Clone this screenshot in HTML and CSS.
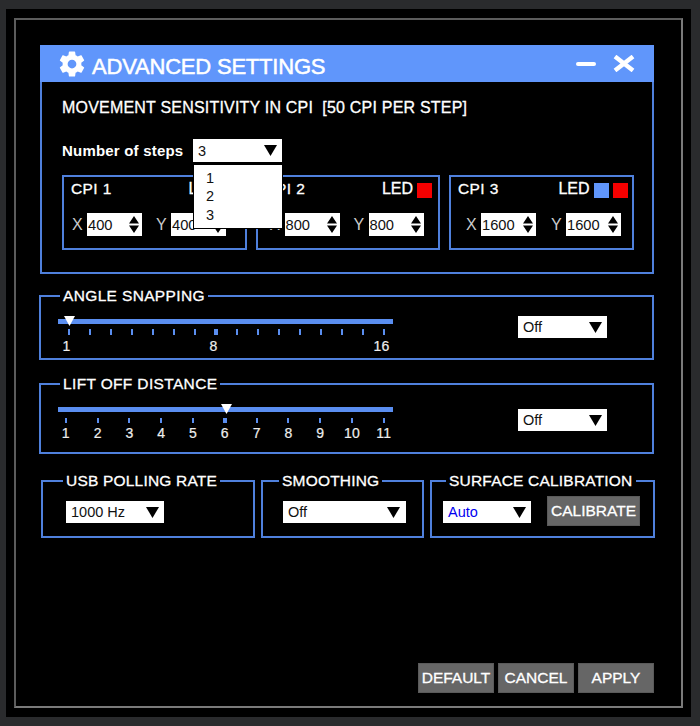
FILE: index.html
```html
<!DOCTYPE html>
<html lang="en">
<head>
<meta charset="utf-8">
<title>Advanced Settings</title>
<link rel="stylesheet" href="styles.css">
</head>
<body>
<div class="shell">
  <div class="frame">
    <section class="panel">
      <header class="titlebar">
        <svg class="gear" viewBox="0 0 24 24"><path fill="#fff" d="M12 15.5A3.5 3.5 0 0 1 8.5 12 3.5 3.5 0 0 1 12 8.5a3.5 3.5 0 0 1 3.5 3.5 3.5 3.5 0 0 1-3.5 3.5m7.43-2.53c.04-.32.07-.64.07-.97s-.03-.66-.07-1l2.11-1.63c.19-.15.24-.42.12-.64l-2-3.46c-.12-.22-.39-.31-.61-.22l-2.49 1c-.52-.39-1.06-.73-1.69-.98l-.37-2.65A.506.506 0 0 0 14 2h-4c-.25 0-.46.18-.5.42l-.37 2.65c-.63.25-1.17.59-1.69.98l-2.49-1c-.22-.09-.49 0-.61.22l-2 3.46c-.13.22-.07.49.12.64L4.57 11c-.04.34-.07.67-.07 1s.03.65.07.97l-2.11 1.66c-.19.15-.25.42-.12.64l2 3.46c.12.22.39.3.61.22l2.49-1.01c.52.4 1.06.74 1.69.99l.37 2.65c.04.24.25.42.5.42h4c.25 0 .46-.18.5-.42l.37-2.65c.63-.26 1.17-.59 1.69-.99l2.49 1.01c.22.08.49 0 .61-.22l2-3.46c.12-.22.07-.49-.12-.64z"/></svg>
        <h1 class="title">ADVANCED SETTINGS</h1>
        <svg class="win-min" viewBox="0 0 20 4"><rect width="20" height="4" rx="2" fill="#fff"/></svg>
        <svg class="win-close" viewBox="0 0 24 17"><path d="M3 1.5 21 15.5M21 1.5 3 15.5" stroke="#fff" stroke-width="4.4" fill="none"/></svg>
      </header>
      <div class="panel-body">
        <h2 class="heading">MOVEMENT SENSITIVITY IN CPI&nbsp; [50 CPI PER STEP]</h2>
        <div class="steps">
          <span class="steps-label">Number of steps</span>
          <div class="select select-steps">
            <span>3</span>
            <svg class="caret" viewBox="0 0 13 11"><path d="M0 0H13L6.5 11Z"/></svg>
            <ul class="dropdown">
              <li>1</li>
              <li>2</li>
              <li>3</li>
            </ul>
          </div>
        </div>
        <div class="cpi-row">
          <div class="cpi cpi-1">
            <div class="cpi-head">
              <span class="cpi-name">CPI 1</span>
              <span class="led">LED</span>
              <i class="swatch swatch-red"></i>
            </div>
            <div class="cpi-fields">
              <span class="axis">X</span>
              <div class="spin"><span>400</span><svg class="spin-arrows" viewBox="0 0 10 17"><path d="M5 0 10 7.5H0ZM5 17 0 9.5H10Z"/></svg></div>
              <span class="axis axis-y">Y</span>
              <div class="spin"><span>400</span><svg class="spin-arrows" viewBox="0 0 10 17"><path d="M5 0 10 7.5H0ZM5 17 0 9.5H10Z"/></svg></div>
            </div>
          </div>
          <div class="cpi cpi-2">
            <div class="cpi-head">
              <span class="cpi-name">CPI 2</span>
              <span class="led">LED</span>
              <i class="swatch swatch-red"></i>
            </div>
            <div class="cpi-fields">
              <span class="axis">X</span>
              <div class="spin"><span>800</span><svg class="spin-arrows" viewBox="0 0 10 17"><path d="M5 0 10 7.5H0ZM5 17 0 9.5H10Z"/></svg></div>
              <span class="axis axis-y">Y</span>
              <div class="spin"><span>800</span><svg class="spin-arrows" viewBox="0 0 10 17"><path d="M5 0 10 7.5H0ZM5 17 0 9.5H10Z"/></svg></div>
            </div>
          </div>
          <div class="cpi cpi-3">
            <div class="cpi-head">
              <span class="cpi-name">CPI 3</span>
              <span class="led">LED</span>
              <i class="swatch swatch-blue"></i>
              <i class="swatch swatch-red"></i>
            </div>
            <div class="cpi-fields">
              <span class="axis">X</span>
              <div class="spin"><span>1600</span><svg class="spin-arrows" viewBox="0 0 10 17"><path d="M5 0 10 7.5H0ZM5 17 0 9.5H10Z"/></svg></div>
              <span class="axis axis-y">Y</span>
              <div class="spin"><span>1600</span><svg class="spin-arrows" viewBox="0 0 10 17"><path d="M5 0 10 7.5H0ZM5 17 0 9.5H10Z"/></svg></div>
            </div>
          </div>
        </div>
      </div>
    </section>

    <section class="group group-angle">
      <h3 class="legend">ANGLE SNAPPING</h3>
      <div class="group-row">
        <div class="slider">
          <div class="track"><svg class="thumb thumb-angle" viewBox="0 0 11 10"><path d="M0 0H11L5.5 10Z"/></svg></div>
          <div class="scale scale-16 ticks">
            <i class="tick"></i><i class="tick"></i><i class="tick"></i><i class="tick"></i><i class="tick"></i><i class="tick"></i><i class="tick"></i><i class="tick tick-big"></i><i class="tick"></i><i class="tick"></i><i class="tick"></i><i class="tick"></i><i class="tick"></i><i class="tick"></i><i class="tick"></i><i class="tick"></i>
          </div>
          <div class="scale scale-16 labels">
            <span class="col-1">1</span><span class="col-8">8</span><span class="col-16">16</span>
          </div>
        </div>
        <div class="select select-side"><span>Off</span><svg class="caret" viewBox="0 0 13 11"><path d="M0 0H13L6.5 11Z"/></svg></div>
      </div>
    </section>

    <section class="group group-lift">
      <h3 class="legend">LIFT OFF DISTANCE</h3>
      <div class="group-row">
        <div class="slider">
          <div class="track"><svg class="thumb thumb-lift" viewBox="0 0 11 10"><path d="M0 0H11L5.5 10Z"/></svg></div>
          <div class="scale scale-11 ticks">
            <i class="tick"></i><i class="tick"></i><i class="tick"></i><i class="tick"></i><i class="tick"></i><i class="tick tick-big"></i><i class="tick"></i><i class="tick"></i><i class="tick"></i><i class="tick"></i><i class="tick"></i>
          </div>
          <div class="scale scale-11 labels">
            <span>1</span><span>2</span><span>3</span><span>4</span><span>5</span><span>6</span><span>7</span><span>8</span><span>9</span><span>10</span><span>11</span>
          </div>
        </div>
        <div class="select select-side"><span>Off</span><svg class="caret" viewBox="0 0 13 11"><path d="M0 0H13L6.5 11Z"/></svg></div>
      </div>
    </section>

    <div class="triple">
      <section class="group group-usb">
        <h3 class="legend">USB POLLING RATE</h3>
        <div class="select select-usb"><span>1000 Hz</span><svg class="caret" viewBox="0 0 13 11"><path d="M0 0H13L6.5 11Z"/></svg></div>
      </section>
      <section class="group group-smooth">
        <h3 class="legend">SMOOTHING</h3>
        <div class="select select-smooth"><span>Off</span><svg class="caret" viewBox="0 0 13 11"><path d="M0 0H13L6.5 11Z"/></svg></div>
      </section>
      <section class="group group-surface">
        <h3 class="legend">SURFACE CALIBRATION</h3>
        <div class="surface-row">
          <div class="select select-auto"><span class="auto-value">Auto</span><svg class="caret" viewBox="0 0 13 11"><path d="M0 0H13L6.5 11Z"/></svg></div>
          <button class="btn btn-calibrate" type="button">CALIBRATE</button>
        </div>
      </section>
    </div>

    <footer class="actions">
      <button class="btn btn-action" type="button">DEFAULT</button>
      <button class="btn btn-action" type="button">CANCEL</button>
      <button class="btn btn-action" type="button">APPLY</button>
    </footer>
  </div>
</div>
</body>
</html>
```

FILE: styles.css
```css
* { box-sizing: border-box; }
html, body { margin: 0; height: 100%; }
body {
  background: #2a2b2d;
  font-family: "Liberation Sans", Arial, sans-serif;
  color: #fff;
  overflow: hidden;
}
.shell {
  width: 685px;
  height: 708px;
  margin: 9px 0 0 6px;
  padding: 9px 8px 9px 8px;
  background: #000;
}
.frame {
  width: 669px;
  height: 690px;
  border: 2px solid #5c5c5c;
  border-right-color: #7a7a7a;
  border-bottom-color: #7a7a7a;
  padding: 25px 0 0 24px;
}

/* main panel */
.panel {
  width: 614px;
  height: 229px;
  border: 2px solid #4f80dc;
  border-top: 0;
}
.titlebar {
  display: flex;
  align-items: center;
  height: 37px;
  margin: 0 -2px;
  padding: 0 18px 0 17px;
  background: #6096fb;
}
.gear { width: 30px; height: 30px; flex: none; }
.title {
  flex: 1;
  margin: 0 0 0 5px;
  padding-top: 6px;
  font-size: 22px;
  line-height: 31px;
  font-weight: 400;
  letter-spacing: -0.2px;
  -webkit-text-stroke: 0.5px #fff;
}
.win-min { width: 20px; height: 4px; margin: 1px 16px 0 0; }
.win-close { width: 24px; height: 17px; }

.panel-body { padding: 0 0 0 20px; }
.heading {
  margin: 16px 0 0;
  font-size: 16px;
  line-height: 20px;
  font-weight: 400;
  letter-spacing: 0.2px;
  -webkit-text-stroke: 0.3px #fff;
}
.steps {
  display: flex;
  align-items: center;
  margin-top: 21px;
  height: 23px;
}
.steps-label {
  width: 131px;
  font-size: 15px;
  font-weight: 700;
  letter-spacing: 0.2px;
}

/* selects */
.select {
  position: relative;
  display: flex;
  align-items: center;
  justify-content: space-between;
  height: 22px;
  background: #fff;
  color: #111;
  font-size: 14.5px;
  padding: 0 5px;
}
.caret { width: 13px; height: 11px; flex: none; }
.select-steps { width: 89px; height: 23px; padding-right: 5px; }
.dropdown {
  position: absolute;
  top: 25px;
  left: 0;
  z-index: 2;
  width: 90px;
  height: 65px;
  margin: 0;
  padding: 4px 0 0 12px;
  list-style: none;
  background: #fff;
  border: 1px solid #000;
  line-height: 18.4px;
}

/* CPI boxes */
.cpi-row {
  display: flex;
  gap: 9px;
  margin-top: 13px;
}
.cpi {
  width: 184.5px;
  height: 75px;
  border: 2px solid #4f80dc;
}
.cpi-head {
  display: flex;
  align-items: center;
  height: 16px;
  margin: 5px 6px 0 7px;
  gap: 4px;
}
.cpi-3 .cpi-head { margin-right: 4px; }
.cpi-name {
  flex: 1;
  padding-bottom: 2px;
  font-size: 15.5px;
  letter-spacing: 0.4px;
  -webkit-text-stroke: 0.3px #fff;
}
.led {
  padding-bottom: 2px;
  font-size: 16px;
  letter-spacing: 0;
  -webkit-text-stroke: 0.3px #fff;
}
.swatch { width: 15px; height: 15px; flex: none; }
.swatch-red { background: #f50000; }
.swatch-blue { background: #6096fb; }
.cpi-fields {
  display: flex;
  align-items: center;
  height: 23px;
  margin-top: 15px;
  color: #ccc;
  font-size: 16px;
}
.cpi-1 .cpi-fields { padding-left: 8px; }
.cpi-2 .cpi-fields { padding-left: 12px; }
.cpi-3 .cpi-fields { padding-left: 15px; }
.axis { width: 15px; }
.axis-y { width: 15px; margin-left: 14px; }
.cpi-3 .axis-y { margin-left: 15px; }
.spin {
  display: flex;
  align-items: center;
  justify-content: space-between;
  width: 55px;
  height: 23px;
  padding: 0 3px 0 1px;
  background: #fff;
  color: #111;
  font-size: 14.7px;
}
.spin-arrows { width: 10px; height: 17px; flex: none; }

/* grouped boxes */
.group {
  border: 2px solid #4f80dc;
}
.legend {
  width: max-content;
  height: 20px;
  margin: -11px 0 0 0;
  padding: 0 3px;
  background: #000;
  font-size: 15.5px;
  line-height: 20px;
  font-weight: 400;
  letter-spacing: 0.2px;
  -webkit-text-stroke: 0.3px #fff;
}
.group-angle, .group-lift {
  width: 615px;
  margin-left: -1px;
  padding-left: 17px;
}
.group-angle .legend, .group-lift .legend { margin-left: 2px; letter-spacing: 0.35px; }
.group-angle { height: 65px; margin-top: 21px; }
.group-lift { height: 71px; margin-top: 23px; }
.group-row { display: flex; }
.slider { width: 335px; }
.group-angle .slider { padding-top: 13px; }
.group-lift .slider { padding-top: 13px; }
.track {
  position: relative;
  width: 335px;
  height: 5px;
  background: #5a8ef0;
}
.thumb {
  position: absolute;
  width: 11px;
  height: 10px;
  fill: #fff;
}
.thumb-angle { left: 6px; top: -3px; }
.thumb-lift { left: 163px; top: -3px; }
.scale { display: grid; }
.scale-16 { grid-template-columns: repeat(16, 21px); }
.scale-11 { grid-template-columns: repeat(11, 31.8px); margin-left: -8px; }
.ticks { height: 6px; margin-top: 5px; }
.group-lift .ticks { height: 5px; margin-top: 6px; }
.tick { width: 2px; height: 100%; background: #5a8ef0; justify-self: center; }
.tick-big { width: 4px; }
.labels {
  margin-top: 3px;
  font-size: 14px;
  line-height: 16px;
  letter-spacing: 0.3px;
  color: #eee;
  text-align: center;
  -webkit-text-stroke: 0.2px #eee;
}
.group-lift .labels { margin-top: 2px; }
.scale-16.labels { margin-left: -2px; }
.col-1 { grid-column: 1; }
.col-8 { grid-column: 8; }
.col-16 { grid-column: 16; }
.select-side { width: 89px; margin-left: 125px; height: 22px; }
.group-angle .select-side { margin-top: 10px; }
.group-lift .select-side { margin-top: 15px; }

.triple {
  display: flex;
  gap: 6px;
  margin: 26px 0 0 1px;
}
.group-usb, .group-smooth, .group-surface { height: 58px; }
.group-usb { width: 214px; padding-left: 23px; }
.group-usb .legend { margin-left: -3px; margin-bottom: 10px; }
.group-smooth { width: 163px; padding-left: 20px; }
.group-smooth .legend { margin-left: -4px; margin-bottom: 10px; }
.group-surface { width: 225px; padding-left: 11px; }
.group-surface .legend { margin-left: 3px; margin-bottom: 5px; }
.select-usb { width: 98px; }
.select-smooth { width: 123px; }
.select-smooth .caret { margin-right: 1px; }
.surface-row { display: flex; align-items: flex-start; gap: 16px; }
.select-auto { width: 88px; margin-top: 5px; }
.auto-value { color: #0000f0; }

/* buttons */
.btn {
  display: block;
  padding: 0;
  border: 1px solid #5a5a5a;
  background: #666;
  color: #fff;
  font-family: inherit;
  font-size: 15.5px;
  -webkit-text-stroke: 0.3px #fff;
}
.btn-calibrate { width: 93px; height: 30px; }
.actions {
  display: flex;
  justify-content: flex-end;
  gap: 4px;
  width: 614px;
  margin-top: 125px;
}
.btn-action { width: 76px; height: 30px; }
```
